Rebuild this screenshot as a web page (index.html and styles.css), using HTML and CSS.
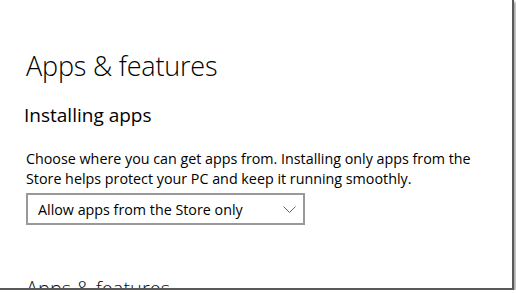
FILE: index.html
```html
<!DOCTYPE html>
<html lang="en">
<head>
  <meta charset="UTF-8" />
  <title>Apps &amp; features</title>
  <link rel="stylesheet" href="styles.css">
</head>
<body>
  <div class="window">
    <div class="content">
      <h1>Apps &amp; features</h1>
      <h2>Installing apps</h2>
      <p>Choose where you can get apps from. Installing only apps from the Store helps protect your PC and keep it running smoothly.</p>
      <div class="select">
        <span>Allow apps from the Store only</span>
        <svg width="13" height="7" viewBox="0 0 13 7"><path d="M0.5 0.5 L6.5 6.5 L12.5 0.5" fill="none" stroke="#666" stroke-width="1"/></svg>
      </div>
      <h2 class="next">Apps &amp; features</h2>
    </div>
  </div>
</body>
</html>
```

FILE: styles.css
```css
* {
  box-sizing: border-box;
  margin: 0;
  padding: 0;
}

body {
  background: #fff;
  font-family: "Open Sans", "Noto Sans", sans-serif;
  color: #000;
}

.window {
  width: 514px;
  height: 290px;
  border-right: 2px solid #5a5a5a;
  border-bottom: 2px solid #5a5a5a;
  box-shadow: 2px 2px 2px #aaa;
  overflow: hidden;
  background: #fff;
}

.content {
  padding: 42px 0 0 26px;
}

h1 {
  font-size: 27px;
  font-weight: 300;
  line-height: 48px;
  letter-spacing: -0.2px;
}

h2 {
  font-size: 19px;
  font-weight: 400;
  line-height: 28px;
  margin-top: 11px;
  margin-left: -2px;
}

p {
  font-size: 14.3px;
  line-height: 20px;
  margin-top: 20px;
  width: 470px;
}

.select {
  width: 279px;
  height: 32px;
  margin-top: 4px;
  border: 2px solid #999;
  display: flex;
  align-items: center;
  justify-content: space-between;
  padding: 0 7px 0 10px;
  font-size: 14.3px;
}

.select svg {
  margin-top: 1px;
}

.next {
  margin-top: 50px;
  margin-left: 0;
  font-size: 20px;
  font-weight: 300;
  color: #111;
}
```
